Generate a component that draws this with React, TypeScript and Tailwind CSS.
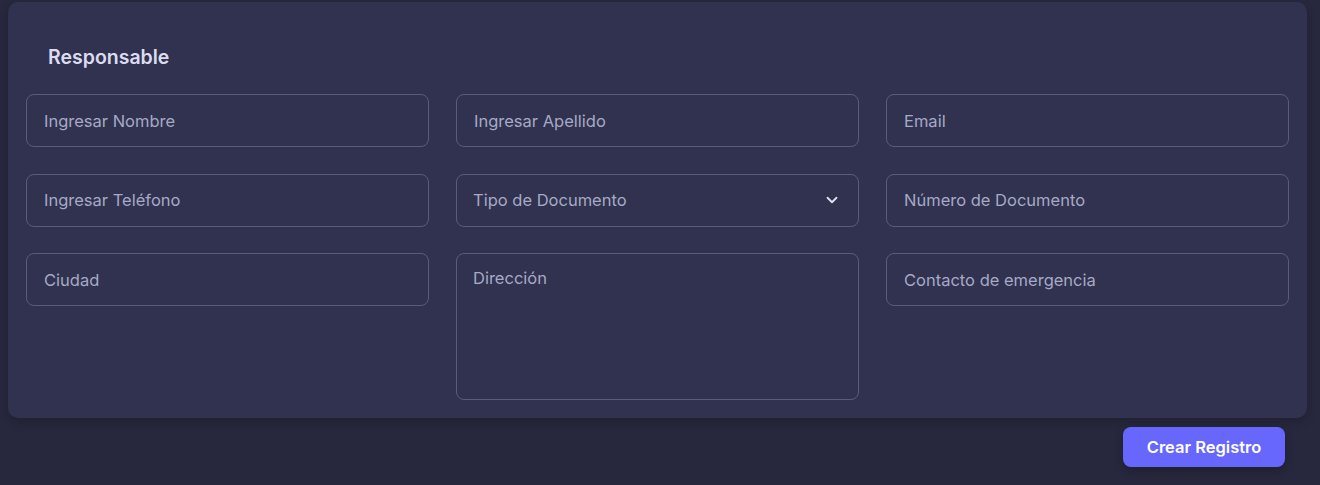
import React from 'react';

const inputCls =
    'h-[53px] w-full rounded-[8px] border border-[#5b5c7a] bg-transparent px-[17px] text-[16.5px] text-[#e4e5f5] placeholder:text-[#a7a9c6] outline-none';

const App: React.FC = () => {
    return (
        <div
            className="min-h-[485px] w-full bg-[#27283d] pt-[2px]"
            style={{ fontFamily: 'Inter, "Noto Sans", sans-serif' }}
        >
            <div className="ml-[8px] w-[1299px] rounded-[10px] bg-[#30324f] px-[18px] pb-[18px] shadow-[0_4px_10px_rgba(0,0,0,0.2)]">
                <h2 className="pl-[22px] pt-[41px] pb-[23px] text-[19.5px] font-semibold leading-[28px] text-[#dcdcf0]">
                    Responsable
                </h2>
                <div className="grid grid-cols-3 gap-x-[27px] gap-y-[26.5px] items-start">
                    <input className={inputCls} placeholder="Ingresar Nombre" />
                    <input className={inputCls} placeholder="Ingresar Apellido" />
                    <input className={inputCls} placeholder="Email" />
                    <input className={inputCls} placeholder="Ingresar Teléfono" />
                    <div className="relative">
                        <select
                            defaultValue=""
                            className="h-[53px] w-full appearance-none rounded-[8px] border border-[#5b5c7a] bg-transparent px-[16px] text-[16.5px] text-[#a7a9c6] outline-none"
                        >
                            <option value="" disabled>
                                Tipo de Documento
                            </option>
                        </select>
                        <svg
                            className="pointer-events-none absolute right-[18px] top-1/2 -translate-y-1/2"
                            width="18"
                            height="18"
                            viewBox="0 0 24 24"
                            fill="none"
                            stroke="#e0e1f2"
                            strokeWidth="2.4"
                            strokeLinecap="round"
                            strokeLinejoin="round"
                        >
                            <path d="M6 9l6 6 6-6" />
                        </svg>
                    </div>
                    <input className={inputCls} placeholder="Número de Documento" />
                    <input className={inputCls} placeholder="Ciudad" />
                    <textarea
                        className="h-[147px] w-full resize-none rounded-[8px] border border-[#5b5c7a] bg-transparent px-[16px] pt-[12px] text-[16.5px] text-[#e4e5f5] placeholder:text-[#a7a9c6] outline-none"
                        placeholder="Dirección"
                    />
                    <input className={inputCls} placeholder="Contacto de emergencia" />
                </div>
            </div>
            <div className="flex w-[1285px] justify-end pt-[9px]">
                <button className="h-[40px] w-[162px] rounded-[8px] bg-[#6767fd] text-[16.5px] font-semibold text-white shadow-[0_4px_10px_rgba(0,0,0,0.25)]">
                    Crear Registro
                </button>
            </div>
        </div>
    );
};

export default App;
